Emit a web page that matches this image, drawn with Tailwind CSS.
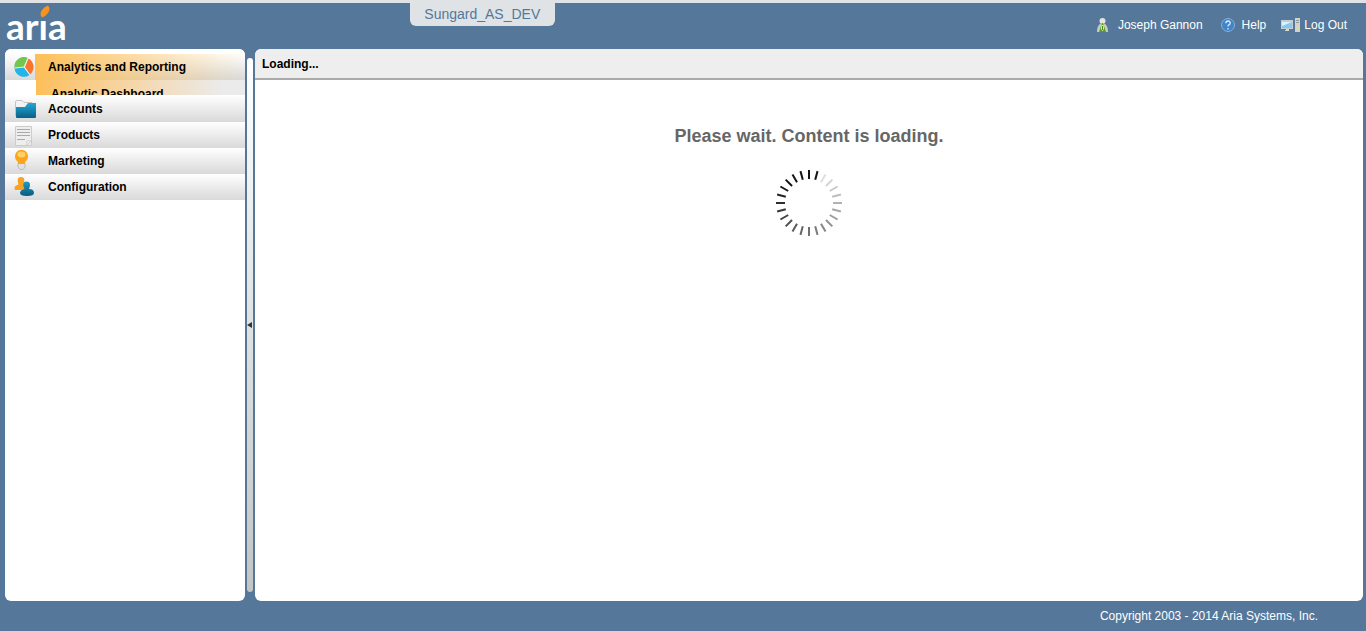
<!DOCTYPE html>
<html lang="en">
<head>
<meta charset="utf-8">
<title>Aria</title>
<meta name="viewport" content="width=device-width, initial-scale=1">
<script src="https://cdn.jsdelivr.net/npm/@tailwindcss/browser@4"></script>
</head>
<body class="flex h-screen flex-col overflow-hidden border-t-3 border-[#dfe3e6] bg-[#557799] font-['Liberation_Sans',Arial,sans-serif] text-xs text-black">

<header class="relative flex h-[46px] shrink-0 items-start justify-between pr-[19px] pl-1.5 text-white">
  <a href="#" aria-label="aria" class="relative block font-['Lato',sans-serif] text-[37px] leading-[46px] font-bold">arıa
    <svg class="absolute top-0.5 left-[33px] h-4 w-3" viewBox="0 0 12 16" aria-hidden="true"><path d="M3 12.500Q0 9 3 5Q6 1 9 0.500Q12 4 9 8Q7 11 3 12.500Z" fill="#f7941d"/></svg>
  </a>
  <div class="absolute top-0 left-[30%] h-[23px] w-[145px] rounded-b-md bg-[#dfe3e6] text-center text-sm leading-[22px] text-[#557799]">Sungard_AS_DEV</div>
  <nav class="flex items-center pt-3.5">
    <a href="#" class="mr-[17px] flex items-center gap-[7px]">
      <svg class="h-4 w-4" viewBox="0 0 16 16" aria-hidden="true"><path d="M2 15Q2 9 5 7H10Q13 9 13 15Z" fill="#c9ccc5"/><circle cx="7.500" cy="4" r="3" fill="#e5e5df"/><path d="M7 6H8L11 15H4Z" fill="#58a01c"/><path d="M6.500 8H8.500L9 12L7.500 14L6 12Z" fill="#e5f5c8"/><path d="M7 9H8V13H7Z" fill="#438c13"/></svg>
      Joseph Gannon</a>
    <a href="#" class="mr-3.5 flex items-center gap-1.5">
      <svg class="h-4 w-4" viewBox="0 0 16 16" aria-hidden="true"><circle cx="8" cy="8" r="6.500" fill="#3f85ca" stroke="#8daed0"/><path d="M5.800 6.200Q6 4 8 4T10.200 6Q10.200 7.200 8.800 7.900Q8 8.400 8 9.500M8 11V12.500" fill="none" stroke="#dcebfa" stroke-width="1.300"/></svg>
      Help</a>
    <a href="#" class="flex items-center gap-[3px]">
      <svg class="h-4 w-[21px]" viewBox="0 0 21 16" aria-hidden="true"><path d="M1 3H13V12H1Z" fill="#c5cdd3"/><path d="M2 5H12V11H2Z" fill="#82cbed"/><path d="M2 5H12L2 9Z" fill="#d9f2fb"/><path d="M6 12H9V14H5V13H6Z" fill="#d7d7d7"/><path d="M15 1H20V15H15Z" fill="#d2d2cd"/><path d="M16 3.500H19M16 5.500H19" stroke="#929895"/><path d="M17 10H19V12H17Z" fill="#d5e67b"/></svg>
      Log Out</a>
  </nav>
</header>

<div class="flex min-h-0 flex-1 pr-[3px] pl-[5px]">
  <aside class="w-60 shrink-0 overflow-hidden rounded-md bg-white font-bold">
    <nav>
      <a href="#" class="flex h-[31px] items-end bg-linear-to-b from-white from-15% to-[#d9d9d9]">
        <span class="flex h-[26px] w-[30px] shrink-0 items-center justify-end">
          <svg class="h-5 w-[21px]" viewBox="0 0 21 20" aria-hidden="true"><path d="M10 10L0.500 11A9.500 9.500 0 0 1 14 1Z" fill="#72c64b"/><path d="M10 10L0.500 11A9.500 9.500 0 0 0 15.500 18Z" fill="#25b3e8"/><path d="M11 10L14.500 1.500A9.700 9.700 0 0 1 16 17.500Z" fill="#f9752c"/><path d="M10 10L14 1M10 10L1 11M10 10L16 18" stroke="#eee"/></svg>
        </span>
        <span class="h-[26px] flex-1 bg-linear-to-r from-[#fdbf57] to-transparent pl-[13px] leading-[26px]">Analytics and Reporting</span>
      </a>
      <div class="ml-[31px] h-[15px] overflow-hidden bg-linear-to-r from-[#fdbf57] to-[#ebebeb] to-90%">
        <a href="#" class="block pl-[15px] leading-7">Analytic Dashboard</a>
      </div>
      <a href="#" class="flex h-[27px] items-center bg-linear-to-b from-white to-[#d9d9d9]">
        <svg class="mr-3 ml-[9px] h-[22px] w-[22px]" viewBox="0 0 22 22" aria-hidden="true"><path d="M1.500 18V3.500Q1.500 2.500 3 2.500H8L10 4.500H18V9" fill="#f3f3f3" stroke="#c3c3c3"/><linearGradient id="folder" x2="0" y2="1"><stop stop-color="#22a8d6"/><stop offset="1" stop-color="#096085"/></linearGradient><path d="M2 19V9H11L14 5H22V19Q22 20 21 20H3Q2 20 2 19Z" fill="url(#folder)"/></svg>
        Accounts</a>
      <a href="#" class="flex h-[26px] items-center bg-linear-to-b from-white to-[#d9d9d9]">
        <svg class="mr-3 ml-[9px] h-[22px] w-[22px]" viewBox="0 0 22 22" aria-hidden="true"><path d="M1.500 2.500H17.500V21.500H1.500Z" fill="#eee" stroke="#ccc"/><path d="M3 5.500H16M3 8.500H16M3 11.500H16M3 15.500H11" stroke="#aaa"/><path d="M13 21V17H17Z" fill="#fff" stroke="#ccc"/></svg>
        Products</a>
      <a href="#" class="flex h-[26px] items-center bg-linear-to-b from-white to-[#d9d9d9]">
        <svg class="mr-3 ml-[9px] h-[22px] w-[22px]" viewBox="0 0 22 22" aria-hidden="true"><path d="M4 13H11V17L9 19.500H6L4 17Z" fill="#e0e0e0" stroke="#bcbcbc"/><path d="M4.500 14Q4.500 12 2.500 10.500A6.500 6.500 0 1 1 12.500 10.500Q10.500 12 10.500 14Z" fill="#faa51b"/><ellipse cx="7.500" cy="4.500" rx="4" ry="3" fill="#ffd166"/></svg>
        Marketing</a>
      <a href="#" class="flex h-[26px] items-center bg-linear-to-b from-white to-[#d9d9d9]">
        <svg class="mr-3 ml-[9px] h-[22px] w-[22px]" viewBox="0 0 22 22" aria-hidden="true"><path d="M4.500 8.500Q2 1 7 1T9.500 8L12 10V14H1Q-1 10 4.500 8.500Z" fill="#f8a326"/><linearGradient id="person" x2="0" y2="1"><stop stop-color="#2499c4"/><stop offset="1" stop-color="#075c7e"/></linearGradient><path d="M10.500 13Q7 5.500 12.500 5.500T15 13Q20 13 20 17Q20 20 13 20T6 17Q6 14 10.500 13Z" fill="url(#person)"/></svg>
        Configuration</a>
    </nav>
  </aside>

  <button type="button" aria-label="Collapse menu" class="mx-0.5 mt-[9px] mb-[9px] flex w-1.5 shrink-0 items-center justify-center rounded-sm bg-linear-to-b from-white to-[#c4c4c4]">
    <svg class="h-1.5 w-1.5" viewBox="0 0 6 6" aria-hidden="true"><path d="M0 3L5 0V6Z" fill="#333"/></svg>
  </button>

  <main class="min-w-0 flex-1 overflow-hidden rounded-md bg-white">
    <h1 class="h-[31px] border-b-2 border-[#aaa] bg-[#eee] pl-[7px] leading-[30px] font-bold">Loading...</h1>
    <div class="flex flex-col items-center pt-11">
      <p class="text-lg leading-6 font-bold text-[#666]">Please wait. Content is loading.</p>
      <svg id="spinner" class="mt-[21px] h-[68px] w-[68px]" viewBox="-34 -34 68 68" role="img" aria-label="Loading" stroke-width="2"></svg>
    </div>
  </main>
</div>

<footer class="h-[30px] shrink-0 pr-12 text-right leading-[30px] text-white">Copyright 2003 - 2014 Aria Systems, Inc.</footer>

<script>
  const spinner = document.getElementById('spinner');
  for (let i = 0; i < 24; i++) {
    const tick = document.createElementNS('http://www.w3.org/2000/svg', 'line');
    const shade = Math.round(Math.max(20, 222 - i * 11));
    tick.setAttribute('y1', -33);
    tick.setAttribute('y2', -24);
    tick.setAttribute('stroke', `rgb(${shade},${shade},${shade})`);
    tick.setAttribute('transform', `rotate(${30 + i * 15})`);
    spinner.appendChild(tick);
  }
</script>
</body>
</html>
